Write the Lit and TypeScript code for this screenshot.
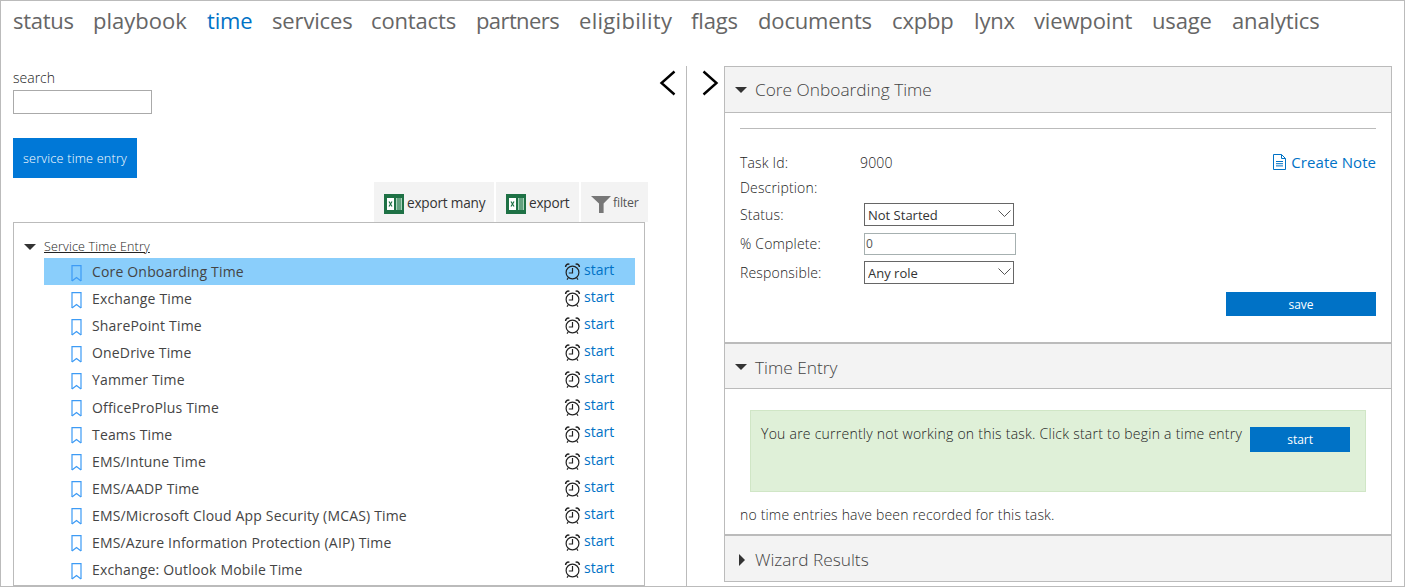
import { LitElement, css, html } from 'lit'
import { customElement } from 'lit/decorators.js'

// widths measured off the tabs, the stand-in font runs a little different
const NAV = [
   { label: 'status', width: 60, spacing: -.3 }, { label: 'playbook', width: 94, spacing: 0 }, { label: 'time', width: 45, spacing: -.15 },
   { label: 'services', width: 79, spacing: -.15 }, { label: 'contacts', width: 85, spacing: -.15 }, { label: 'partners', width: 83, spacing: -.6 },
   { label: 'eligibility', width: 92, spacing: .3 }, { label: 'flags', width: 47, spacing: -.15 }, { label: 'documents', width: 114, spacing: -.15 },
   { label: 'cxpbp', width: 62, spacing: -.15 }, { label: 'lynx', width: 40, spacing: -.15 }, { label: 'viewpoint', width: 98, spacing: -.15 },
   { label: 'usage', width: 60, spacing: -.15 }, { label: 'analytics', width: 87, spacing: -.15 },
]
const TASKS = ['Core Onboarding Time', 'Exchange Time', 'SharePoint Time', 'OneDrive Time', 'Yammer Time', 'OfficeProPlus Time', 'Teams Time', 'EMS/Intune Time', 'EMS/AADP Time', 'EMS/Microsoft Cloud App Security (MCAS) Time', 'EMS/Azure Information Protection (AIP) Time', 'Exchange: Outlook Mobile Time']

const excelIcon = html`<svg class="xl" width="20" height="20" viewBox="0 0 20 20">
   <rect width="20" height="20" fill="#1e7145"/>
   <rect x="3" y="4" width="7" height="12" fill="#fff"/>
   <rect x="12" y="4" width="6" height="12" fill="#a9d3bb"/>
   <path d="M14 4v12M16 4v12" stroke="#1e7145" stroke-width="1"/>
   <path d="M5 7.5l3 5M8 7.5l-3 5" stroke="#1e7145" stroke-width="1.2"/>
</svg>`

const bookmark = html`<svg class="mark" width="11" height="18" viewBox="0 0 11 18" fill="none" stroke="#3d9bf5" stroke-width="1.2">
   <path d="M1 17V1.6h9V17"/>
   <path d="M1 17l4.5-3.4L10 17"/>
</svg>`

const clock = html`<svg class="clock" width="17" height="19" viewBox="0 0 17 19" fill="none" stroke="#222" stroke-width="1.2">
   <circle cx="8.5" cy="10.5" r="6.4"/>
   <path d="M8.5 6v5H4.8"/>
   <path d="M1.6 5C1.6 3 3.4 1.4 5.4 2.4M15.4 5C15.4 3 13.6 1.4 11.6 2.4" stroke-width="1.5"/>
   <path d="M4.2 16l-1.2 1.6M12.8 16l1.2 1.6"/>
</svg>`

const chevron = html`<svg class="chev" width="13" height="7" viewBox="0 0 13 7" fill="none" stroke="#555" stroke-width="1"><path d="M.5.5l6 6 6-6"/></svg>`

@customElement('app-root')
export class AppRoot extends LitElement {

   render() {
      return html`
         <nav class="nav">
            ${NAV.map(n => html`<a class=${n.label === 'time' ? 'active' : ''} style="width:${n.width}px;letter-spacing:${n.spacing}px">${n.label}</a>`)}
         </nav>
         <div class="main">
            <section class="left">
               <label class="search-label">search</label>
               <input class="search" type="text">
               <button class="primary entry">service time entry</button>
               <div class="toolbar">
                  <div class="tool wide">${excelIcon}<span>export many</span></div>
                  <div class="tool mid">${excelIcon}<span>export</span></div>
                  <div class="tool narrow">
                     <svg class="funnel" width="20" height="17" viewBox="0 0 20 17"><path d="M0 0h20l-7.4 7.5V17H8V7.5z" fill="#777"/></svg>
                     <span class="small">filter</span>
                  </div>
               </div>
               <div class="tree">
                  <div class="tree-head"><i class="tri big"></i><u>Service Time Entry</u></div>
                  ${TASKS.map((t, i) => html`
                     <div class="row ${i === 0 ? 'selected' : ''}">
                        ${bookmark}
                        <span class="name">${t}</span>
                        ${clock}
                        <a class="start">start</a>
                     </div>`)}
               </div>
            </section>
            <div class="arrows">
               <svg width="18" height="26" viewBox="0 0 18 26" fill="none" stroke="#000" stroke-width="2.4"><path d="M15.5 1.5L2.5 13l13 11.5"/></svg>
               <div class="split"></div>
               <svg width="18" height="26" viewBox="0 0 18 26" fill="none" stroke="#000" stroke-width="2.4"><path d="M2.5 1.5L15.5 13 2.5 24.5"/></svg>
            </div>
            <section class="right">
               <header class="phead"><i class="tri"></i>Core Onboarding Time</header>
               <div class="core">
                  <hr>
                  <a class="note">
                     <svg width="13" height="16" viewBox="0 0 13 16" fill="none" stroke="#0072c6" stroke-width="1"><path d="M.5.5h8l4 4v11H.5z"/><path d="M8.5.5v4h4M3 7.5h7M3 9.7h7M3 11.9h7"/></svg>
                     Create Note
                  </a>
                  <div class="form">
                     <span>Task Id:</span><span class="val">9000</span>
                     <span>Description:</span><span></span>
                     <span>Status:</span>
                     <div class="sel"><select><option>Not Started</option></select>${chevron}</div>
                     <span>% Complete:</span>
                     <input class="pct" value="0">
                     <span>Responsible:</span>
                     <div class="sel"><select><option>Any role</option></select>${chevron}</div>
                  </div>
                  <div class="actions"><button class="primary wide-btn">save</button></div>
               </div>
               <header class="phead thick"><i class="tri"></i>Time Entry</header>
               <div class="time">
                  <div class="notice">
                     <span>You are currently not working on this task. Click start to begin a time entry</span>
                     <button class="primary start-btn">start</button>
                  </div>
                  <p class="none">no time entries have been recorded for this task.</p>
               </div>
               <header class="phead thick last"><i class="tri closed"></i>Wizard Results</header>
            </section>
         </div>
      `
   }

   static styles = css`
      :host {
         display: flex;
         flex-direction: column;
         box-sizing: border-box;
         height: 587px;
         overflow: hidden;
         border: 1px solid #bbb;
         background: #fff;
         color: #333;
         font-family: "Open Sans", sans-serif;
         font-size: 14px;
      }

      .nav {
         display: flex;
         gap: 20px;
         height: 65px;
         padding: 4px 0 0 12px;
         box-sizing: border-box;
         font-size: 22px;
         line-height: 30px;
         color: #666;
         white-space: nowrap;
      }
      .nav .active { color: #0072c6; }

      .main { display: flex; flex: 1; min-height: 0; }

      .left {
         width: 635px;
         flex: none;
         margin-left: 12px;
         display: flex;
         flex-direction: column;
         align-items: flex-start;
      }
      .search-label { font-size: 14px; line-height: 20px; margin-top: 2px; font-weight: 300; color: #222; }
      .search {
         width: 139px;
         height: 24px;
         box-sizing: border-box;
         border: 1px solid #aaa;
         margin: 2px 0 24px;
      }
      .primary {
         border: 0;
         color: #fff;
         font: inherit;
         font-size: 13px;
         padding: 0;
      }
      .entry { width: 124px; height: 40px; background: #0078d7; font-size: 12.6px; font-weight: 300; letter-spacing: .22px; }

      .toolbar {
         align-self: flex-end;
         display: flex;
         gap: 2px;
         margin-top: 4px;
         height: 40px;
      }
      .tool {
         display: flex;
         align-items: center;
         gap: 3px;
         background: #f3f3f3;
         height: 40px;
         box-sizing: border-box;
         padding-left: 10px;
         font-size: 13.6px;
         letter-spacing: -.2px;
      }
      .tool svg { margin-top: 4px; }
      .tool.wide { width: 120px; }
      .tool.mid { width: 83px; }
      .tool.narrow { width: 67px; gap: 2px; }
      .small { font-size: 12.4px; color: #555; }

      .tree {
         width: 632px;
         box-sizing: border-box;
         border: 1px solid #bbb;
         flex: 1;
         padding: 13px 9px 0 10px;
      }
      .tree-head {
         display: flex;
         align-items: center;
         height: 22px;
         padding-bottom: 1px;
         box-sizing: border-box;
         font-size: 12.5px;
         font-weight: 300;
         letter-spacing: .17px;
         color: #222;
      }
      .tri {
         display: inline-block;
         width: 0;
         height: 0;
         border: solid transparent;
         border-width: 6px 6px 0;
         border-top-color: #333;
      }
      .tri.big { margin-right: 8px; }
      .tri.closed {
         border-width: 6px 0 6px 6px;
         border-color: transparent transparent transparent #333;
      }

      .row {
         display: flex;
         align-items: center;
         height: 27.1px;
         margin-left: 20px;
         padding-left: 27px;
         font-size: 14px;
      }
      .row.selected { background: #8acefb; }
      .mark { flex: none; margin-top: 2px; }
      .name { flex: 1; margin-left: 10px; color: #444; letter-spacing: .17px; }
      .clock { margin-right: 3px; }
      .start { width: 51px; color: #0072c6; margin-top: -4.4px; }

      .arrows {
         width: 76px;
         flex: none;
         display: flex;
         padding-left: 11px;
         box-sizing: border-box;
      }
      .arrows svg { margin-top: 4px; }
      .split { width: 1px; background: #bbb; margin: 0 14px 0 9px; }

      .right {
         width: 668px;
         flex: none;
         box-sizing: border-box;
         border: 1px solid #bbb;
         height: 516px;
         display: flex;
         flex-direction: column;
      }
      .phead {
         display: flex;
         align-items: center;
         gap: 8px;
         height: 46px;
         flex: none;
         padding-left: 10px;
         background: #f3f3f3;
         border-bottom: 1px solid #bbb;
         box-sizing: border-box;
         font-size: 17.3px;
         font-weight: 300;
         color: #444;
      }
      .phead.thick { border-top: 2px solid #bbb; height: 47px; padding-top: 2px; }
      .phead.last { border-bottom: 0; flex: 1; }
      .phead.last .tri { margin: 0 2px 0 4px; }

      .core {
         position: relative;
         height: 229px;
         padding: 15px 15px 0;
         box-sizing: border-box;
      }
      hr { border: 0; border-top: 1px solid #bbb; margin: 0 0 20px; }
      .note {
         position: absolute;
         right: 15px;
         top: 39px;
         display: flex;
         align-items: center;
         gap: 5px;
         color: #0072c6;
         font-size: 15px;
         letter-spacing: .05px;
      }
      .form {
         display: grid;
         grid-template-columns: 124px 152px;
         grid-template-rows: 26px 25px 29px 29px 29px;
         align-items: center;
      }
      .form > span { font-size: 14px; font-weight: 300; letter-spacing: .17px; color: #222; }
      .val { margin-left: -4px; }
      .sel { position: relative; width: 150px; height: 23px; }
      select {
         appearance: none;
         width: 100%;
         height: 100%;
         border: 1px solid #666;
         border-radius: 0;
         background: #fff;
         color: #333;
         font: inherit;
         font-size: 13px;
         padding: 0 0 0 3px;
      }
      .chev { position: absolute; right: 3px; top: 7px; pointer-events: none; }
      .pct {
         width: 152px;
         height: 22px;
         box-sizing: border-box;
         border: 1px solid #a6b0b0;
         font: inherit;
         font-size: 12px;
         color: #555;
         padding: 0 0 0 1px;
      }
      .actions { display: flex; justify-content: flex-end; margin-top: 5px; }
      .wide-btn { width: 150px; height: 24px; background: #0072c6; font-size: 12px; }

      .time { height: 145px; padding: 21px 25px 0; box-sizing: border-box; }
      .notice {
         display: flex;
         align-items: flex-start;
         height: 82px;
         box-sizing: border-box;
         background: #dff0d8;
         border: 1px solid #d0e6c6;
         padding: 13px 0 0 10px;
         gap: 8px;
         font-size: 14px;
         font-weight: 300;
         letter-spacing: .245px;
         color: #222;
      }
      .start-btn { width: 100px; height: 25px; margin-top: 3px; background: #0072c6; font-size: 12px; font-weight: 400; letter-spacing: 0; }
      .none { margin: 13px 0 0 -10px; font-size: 14px; font-weight: 300; letter-spacing: .18px; color: #222; }
   `
}
